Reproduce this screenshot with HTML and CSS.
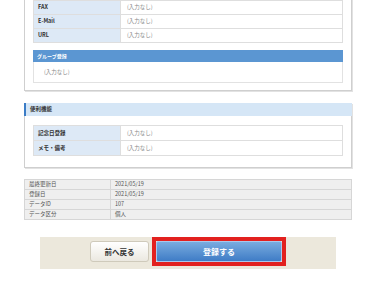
FILE: index.html
```html
<!DOCTYPE html>
<html lang="ja">
  <head>
    <meta charset="UTF-8" />
    <meta name="viewport" content="width=device-width, initial-scale=1.0" />
    <title>確認画面</title>
    <link rel="stylesheet" href="styles.css">
  </head>
  <body>
    <div class="page">
      <section class="panel panel-contact">
        <table class="fields">
          <tr><th>FAX</th><td>(入力なし)</td></tr>
          <tr><th>E-Mail</th><td>(入力なし)</td></tr>
          <tr><th>URL</th><td>(入力なし)</td></tr>
        </table>
        <div class="group">
          <h3 class="group-head">グループ登録</h3>
          <div class="group-body">(入力なし)</div>
        </div>
      </section>

      <section class="panel panel-tools">
        <h2 class="panel-head">便利機能</h2>
        <div class="panel-body">
          <table class="fields fields-tall">
            <tr><th>記念日登録</th><td>(入力なし)</td></tr>
            <tr><th>メモ・備考</th><td>(入力なし)</td></tr>
          </table>
        </div>
      </section>

      <table class="meta">
        <tr><th>最終更新日</th><td>2021/05/19</td></tr>
        <tr><th>登録日</th><td>2021/05/19</td></tr>
        <tr><th>データID</th><td>107</td></tr>
        <tr><th>データ区分</th><td>個人</td></tr>
      </table>

      <div class="actions">
        <button type="button" class="btn btn-back">前へ戻る</button>
        <span class="highlight">
          <button type="submit" class="btn btn-submit">登録する</button>
        </span>
      </div>
    </div>
  </body>
</html>
```

FILE: styles.css
```css
body {
  margin: 0;
  background: #fff;
  font-family: "Noto Sans CJK JP", "Noto Sans", sans-serif;
  color: #333;
}
.page {
  width: 328px;
  margin: -9px 0 0 24px;
}
.panel {
  box-sizing: border-box;
  width: 328px;
  background: #fff;
  border: 1px solid #cfcfcf;
  box-shadow: 1px 1px 0 #e2e2e2;
}
.panel-contact {
  padding: 8px 8px 7px;
}
table {
  border-collapse: collapse;
  width: 100%;
}
.fields th,
.fields td {
  height: 13px;
  padding: 0 4px;
  border: 1px solid #dedede;
  font-size: 5.5px;
  line-height: 13px;
  text-align: left;
}
.fields th {
  width: 78px;
  background: #dde9f6;
  font-weight: bold;
  color: #333;
}
.fields td {
  color: #888;
  padding-left: 6px;
}
.fields-tall th,
.fields-tall td {
  height: 14px;
  line-height: 14px;
}
.group {
  margin-top: 7px;
}
.group-head {
  margin: 0;
  height: 12px;
  padding: 0 4px;
  background: #5b96d2;
  color: #fff;
  font-size: 5px;
  font-weight: bold;
  line-height: 12px;
}
.group-body {
  height: 20px;
  padding: 0 10px;
  border: 1px solid #e2e2e2;
  border-top: none;
  color: #888;
  font-size: 5.5px;
  line-height: 20px;
}
.panel-tools {
  margin-top: 12px;
  border-top: none;
}
.panel-head {
  margin: 0 -1px;
  height: 13px;
  padding: 0 4px;
  background: #d5e6f6;
  border-left: 2px solid #3b7cc6;
  font-size: 5.5px;
  font-weight: bold;
  line-height: 13px;
}
.panel-body {
  padding: 9px 8px 11px;
}
.meta {
  margin-top: 11px;
}
.meta th,
.meta td {
  height: 9px;
  padding: 0 4px;
  border: 1px solid #d6d6d6;
  background: #efefef;
  color: #555;
  font-size: 5.5px;
  font-weight: normal;
  line-height: 9px;
  text-align: left;
}
.meta th {
  width: 77px;
}
.actions {
  display: flex;
  justify-content: center;
  align-items: center;
  gap: 3px;
  width: 296px;
  margin: 17px 0 0 16px;
  padding: 0 0 3px;
  background: #ece8dc;
}
.btn {
  box-sizing: border-box;
  height: 21px;
  padding: 0;
  border-radius: 3px;
  font-family: inherit;
  font-weight: bold;
}
.btn-back {
  width: 59px;
  border: 1px solid #cfcabb;
  background: linear-gradient(#ffffff, #ebe8e0);
  color: #333;
  font-size: 7.5px;
}
.highlight {
  display: block;
  border: 4px solid #e2211f;
}
.btn-submit {
  display: block;
  width: 126px;
  border: 1px solid #a9c8ec;
  border-radius: 2px;
  background: linear-gradient(#79acdf, #3f7cc6);
  color: #fff;
  font-size: 8px;
}
```
